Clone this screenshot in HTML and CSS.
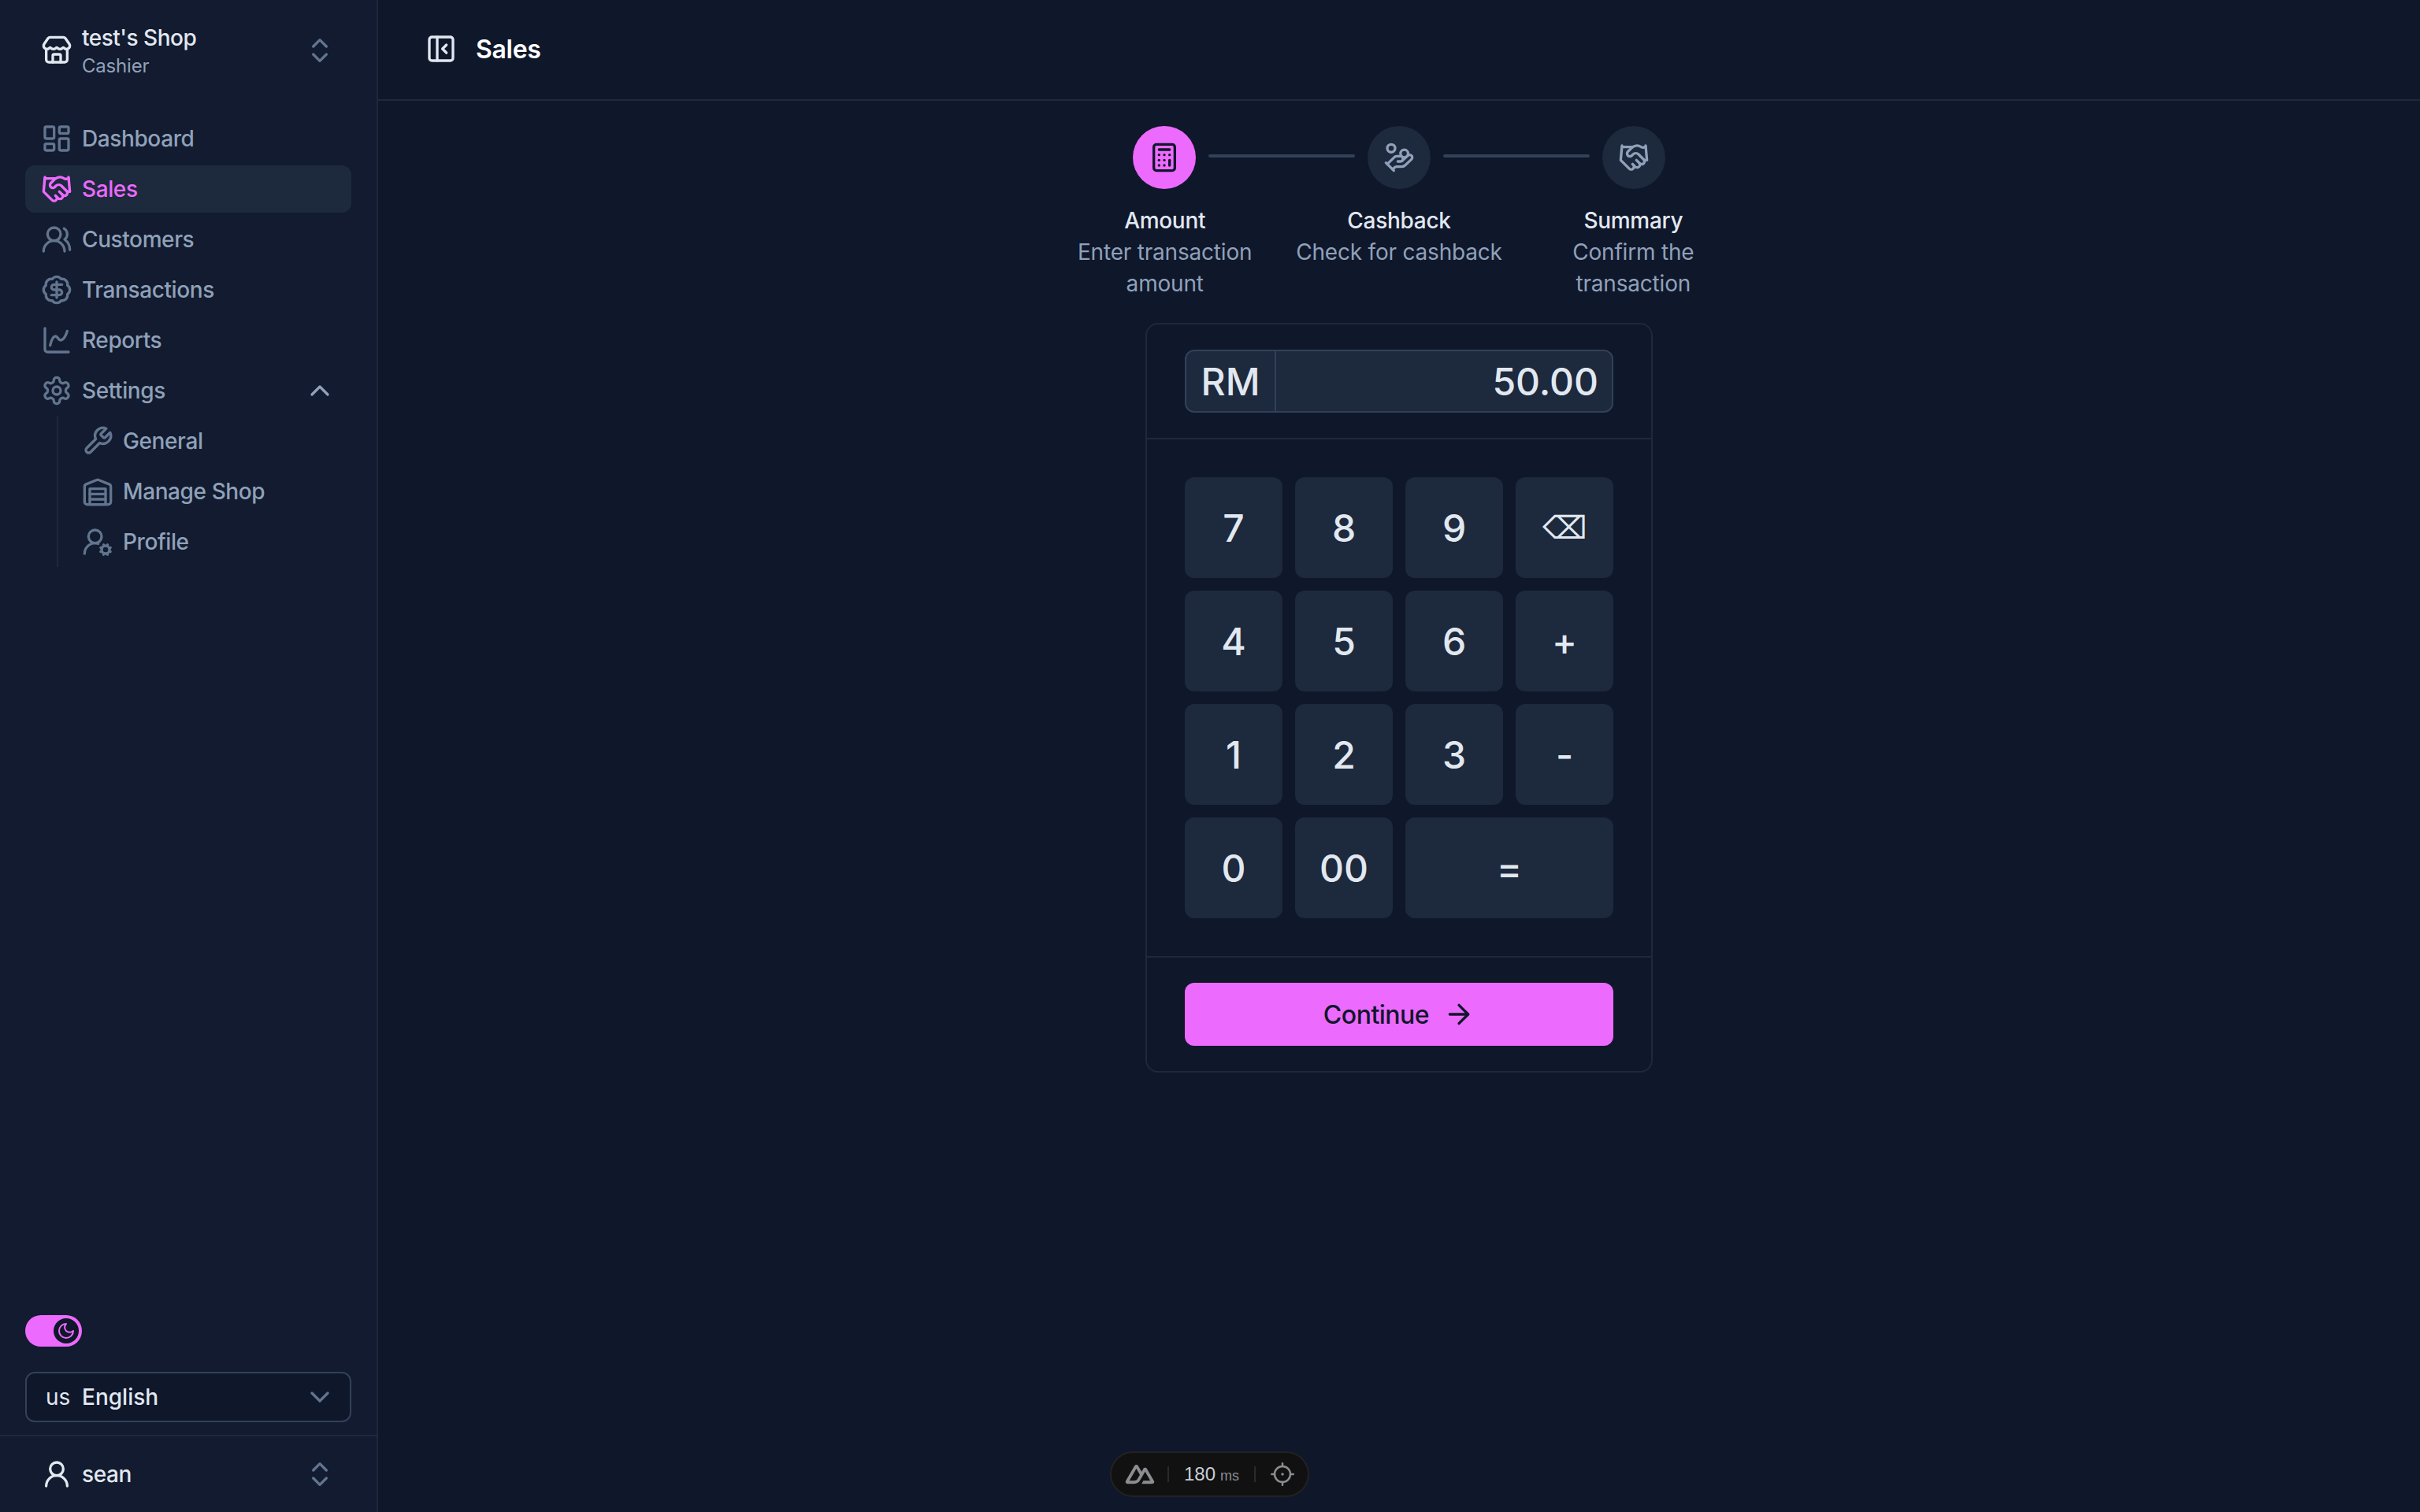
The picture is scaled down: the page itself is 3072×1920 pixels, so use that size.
FILE: index.html
```html
<!DOCTYPE html>
<html lang="en">
<head>
<meta charset="utf-8">
<title>Sales</title>
<link rel="stylesheet" href="styles.css">
</head>
<body>
<svg class="defs" aria-hidden="true">
  <symbol id="updown" viewBox="0 0 24 24"><path d="m7 15 5 5 5-5"/><path d="m7 9 5-5 5 5"/></symbol>
  <symbol id="handshake" viewBox="0 0 24 24"><path d="m11 17 2 2a1 1 0 1 0 3-3"/><path d="m14 14 2.5 2.5a1 1 0 1 0 3-3l-3.88-3.88a3 3 0 0 0-4.24 0l-.88.88a1 1 0 1 1-3-3l2.81-2.81a5.79 5.79 0 0 1 7.06-.87l.47.28a2 2 0 0 0 1.42.25L21 4"/><path d="m21 3 1 11h-2"/><path d="M3 3 2 14l6.5 6.5a1 1 0 1 0 3-3"/><path d="M3 4h8"/></symbol>
</svg>
<div class="app">
  <aside class="sidebar">
    <div class="shop">
      <svg class="ic ic-light" viewBox="0 0 24 24"><path d="M15 21v-5a1 1 0 0 0-1-1h-4a1 1 0 0 0-1 1v5"/><path d="M17.774 10.31a1.12 1.12 0 0 0-1.549 0 2.5 2.5 0 0 1-3.451 0 1.12 1.12 0 0 0-1.548 0 2.5 2.5 0 0 1-3.452 0 1.12 1.12 0 0 0-1.549 0 2.5 2.5 0 0 1-3.77-3.248l2.889-4.184A2 2 0 0 1 7 2h10a2 2 0 0 1 1.653.873l2.895 4.192a2.5 2.5 0 0 1-3.774 3.244"/><path d="M4 10.95V19a2 2 0 0 0 2 2h12a2 2 0 0 0 2-2v-8.05"/></svg>
      <div class="shop-text">
        <div class="shop-name">test's Shop</div>
        <div class="shop-role">Cashier</div>
      </div>
      <svg class="ic ic-dim end"><use href="#updown"/></svg>
    </div>

    <nav class="nav">
      <a class="item"><svg class="ic ic-dim" viewBox="0 0 24 24"><rect x="3" y="3" width="7" height="9" rx="1"/><rect x="14" y="3" width="7" height="5" rx="1"/><rect x="14" y="12" width="7" height="9" rx="1"/><rect x="3" y="16" width="7" height="5" rx="1"/></svg>Dashboard</a>
      <a class="item active"><svg class="ic"><use href="#handshake"/></svg>Sales</a>
      <a class="item"><svg class="ic ic-dim" viewBox="0 0 24 24"><path d="M18 21a8 8 0 0 0-16 0"/><circle cx="10" cy="8" r="5"/><path d="M22 20c0-3.37-2-6.5-4-8a5 5 0 0 0-.45-8.3"/></svg>Customers</a>
      <a class="item"><svg class="ic ic-dim" viewBox="0 0 24 24"><path d="M3.85 8.62a4 4 0 0 1 4.78-4.77 4 4 0 0 1 6.74 0 4 4 0 0 1 4.78 4.78 4 4 0 0 1 0 6.74 4 4 0 0 1-4.77 4.78 4 4 0 0 1-6.75 0 4 4 0 0 1-4.78-4.77 4 4 0 0 1 0-6.76Z"/><path d="M16 8h-6a2 2 0 1 0 0 4h4a2 2 0 1 1 0 4H8"/><path d="M12 18V6"/></svg>Transactions</a>
      <a class="item"><svg class="ic ic-dim" viewBox="0 0 24 24"><path d="M3 3v16a2 2 0 0 0 2 2h16"/><path d="M7 16c.5-2 1.5-7 4-7 2 0 2 3 4 3 2.5 0 4.5-5 5-7"/></svg>Reports</a>
      <a class="item"><svg class="ic ic-dim" viewBox="0 0 24 24"><path d="M12.22 2h-.44a2 2 0 0 0-2 2v.18a2 2 0 0 1-1 1.73l-.43.25a2 2 0 0 1-2 0l-.15-.08a2 2 0 0 0-2.73.73l-.22.38a2 2 0 0 0 .73 2.73l.15.1a2 2 0 0 1 1 1.72v.51a2 2 0 0 1-1 1.74l-.15.09a2 2 0 0 0-.73 2.73l.22.38a2 2 0 0 0 2.73.73l.15-.08a2 2 0 0 1 2 0l.43.25a2 2 0 0 1 1 1.73V20a2 2 0 0 0 2 2h.44a2 2 0 0 0 2-2v-.18a2 2 0 0 1 1-1.73l.43-.25a2 2 0 0 1 2 0l.15.08a2 2 0 0 0 2.73-.73l.22-.39a2 2 0 0 0-.73-2.73l-.15-.08a2 2 0 0 1-1-1.74v-.5a2 2 0 0 1 1-1.74l.15-.09a2 2 0 0 0 .73-2.73l-.22-.38a2 2 0 0 0-2.73-.73l-.15.08a2 2 0 0 1-2 0l-.43-.25a2 2 0 0 1-1-1.73V4a2 2 0 0 0-2-2z"/><circle cx="12" cy="12" r="3"/></svg>Settings<svg class="ic ic-muted end" viewBox="0 0 24 24"><path d="m18 15-6-6-6 6"/></svg></a>
      <div class="sub">
        <a class="item"><svg class="ic ic-dim" viewBox="0 0 24 24"><path d="M14.7 6.3a1 1 0 0 0 0 1.4l1.6 1.6a1 1 0 0 0 1.4 0l3.77-3.77a6 6 0 0 1-7.94 7.94l-6.91 6.91a2.12 2.12 0 0 1-3-3l6.91-6.91a6 6 0 0 1 7.94-7.94l-3.76 3.76z"/></svg>General</a>
        <a class="item"><svg class="ic ic-dim" viewBox="0 0 24 24"><path d="M22 8.35V20a2 2 0 0 1-2 2H4a2 2 0 0 1-2-2V8.35A2 2 0 0 1 3.26 6.5l8-3.2a2 2 0 0 1 1.48 0l8 3.2A2 2 0 0 1 22 8.35Z"/><path d="M6 18h12"/><path d="M6 14h12"/><rect x="6" y="10" width="12" height="12"/></svg>Manage Shop</a>
        <a class="item"><svg class="ic ic-dim" viewBox="0 0 24 24"><path d="M2 21a8 8 0 0 1 10.434-7.62"/><circle cx="10" cy="8" r="5"/><circle cx="18" cy="18" r="3"/><path d="m19.5 14.3-.4.9"/><path d="m16.9 20.8-.4.9"/><path d="m21.7 19.5-.9-.4"/><path d="m15.2 16.9-.9-.4"/><path d="m21.7 16.5-.9.4"/><path d="m15.2 19.1-.9.4"/><path d="m19.5 21.7-.4-.9"/><path d="m16.9 15.2-.4-.9"/></svg>Profile</a>
      </div>
    </nav>

    <div class="side-bottom">
      <div class="toggle">
        <span class="knob"><svg class="moon" viewBox="0 0 24 24"><path d="M12 3a6 6 0 0 0 9 9 9 9 0 1 1-9-9Z"/></svg></span>
      </div>
      <div class="lang">
        <span class="flag">us</span>
        <span class="lang-name">English</span>
        <svg class="ic ic-dim end" viewBox="0 0 24 24"><path d="m6 9 6 6 6-6"/></svg>
      </div>
    </div>

    <div class="user">
      <svg class="ic ic-light" viewBox="0 0 24 24"><circle cx="12" cy="8" r="5"/><path d="M20 21a8 8 0 0 0-16 0"/></svg>
      <span class="user-name">sean</span>
      <svg class="ic ic-dim end"><use href="#updown"/></svg>
    </div>
  </aside>

  <main class="main">
    <header class="topbar">
      <svg class="ic ic-light" viewBox="0 0 24 24"><rect x="3" y="3" width="18" height="18" rx="2"/><path d="M9 3v18"/><path d="m16 15-3-3 3-3"/></svg>
      <h1 class="title">Sales</h1>
    </header>

    <section class="content">
      <div class="step-head">
        <span class="circle circle-on"><svg class="ic ic-ink" viewBox="0 0 24 24"><rect x="4" y="2" width="16" height="20" rx="2"/><line x1="8" x2="16" y1="6" y2="6"/><line x1="16" x2="16" y1="14" y2="18"/><path d="M16 10h.01"/><path d="M12 10h.01"/><path d="M8 10h.01"/><path d="M12 14h.01"/><path d="M8 14h.01"/><path d="M12 18h.01"/><path d="M8 18h.01"/></svg></span>
        <span class="bar"></span>
        <span class="circle"><svg class="ic ic-muted" viewBox="0 0 24 24"><path d="M11 15h2a2 2 0 1 0 0-4h-3c-.6 0-1.1.2-1.4.6L3 17"/><path d="m7 21 1.6-1.4c.3-.4.8-.6 1.4-.6h4c1.1 0 2.1-.4 2.8-1.2l4.6-4.4a2 2 0 0 0-2.75-2.91l-4.2 3.9"/><path d="m2 16 6 6"/><circle cx="16" cy="9" r="2.9"/><circle cx="6" cy="5" r="3"/></svg></span>
        <span class="bar"></span>
        <span class="circle"><svg class="ic ic-muted"><use href="#handshake"/></svg></span>
      </div>
      <div class="step-labels">
        <div class="step"><div class="step-title">Amount</div><div class="step-desc">Enter transaction amount</div></div>
        <div class="step"><div class="step-title">Cashback</div><div class="step-desc">Check for cashback</div></div>
        <div class="step"><div class="step-title">Summary</div><div class="step-desc">Confirm the transaction</div></div>
      </div>

      <div class="card">
        <div class="card-head">
          <div class="amount">
            <span class="currency">RM</span>
            <span class="value">50.00</span>
          </div>
        </div>
        <div class="keypad">
          <button class="key">7</button>
          <button class="key">8</button>
          <button class="key">9</button>
          <button class="key key-back">⌫</button>
          <button class="key">4</button>
          <button class="key">5</button>
          <button class="key">6</button>
          <button class="key key-op">+</button>
          <button class="key">1</button>
          <button class="key">2</button>
          <button class="key">3</button>
          <button class="key key-op">-</button>
          <button class="key">0</button>
          <button class="key">00</button>
          <button class="key key-op key-wide">=</button>
        </div>
        <div class="card-foot">
          <button class="continue">Continue<svg class="ic ic-ink" viewBox="0 0 24 24"><path d="M5 12h14"/><path d="m12 5 7 7-7 7"/></svg></button>
        </div>
      </div>
    </section>
  </main>
</div>

<div class="devtools">
  <svg class="nuxt" viewBox="0 0 512 512"><path d="M281.44 397.667H438.32C443.326 397.667 448.118 395.908 452.453 393.427C456.789 390.946 461.258 387.831 463.76 383.533C466.262 379.236 468.002 374.36 468 369.399C467.998 364.437 466.266 359.563 463.76 355.268L357.76 172.947C355.258 168.65 352.201 165.534 347.867 163.053C343.532 160.573 337.325 158.813 332.32 158.813C327.315 158.813 322.521 160.573 318.187 163.053C313.852 165.534 310.795 168.65 308.293 172.947L281.44 219.587L227.733 129.13C225.229 124.834 222.176 120.307 217.84 117.827C213.504 115.346 208.713 115 203.707 115C198.701 115 193.909 115.346 189.573 117.827C185.238 120.307 180.771 124.834 178.267 129.13L46.8267 355.268C44.3208 359.563 44.0022 364.437 44 369.399C43.9978 374.36 44.3246 379.235 46.8267 383.533C49.3288 387.83 53.7979 390.946 58.1333 393.427C62.4688 395.908 67.2603 397.667 72.2667 397.667H171.2C210.401 397.667 238.934 380.082 258.827 346.787L306.88 263.4L332.32 219.587L410.053 352.44H306.88L281.44 397.667ZM169.787 352.44H100.533L203.707 174.36L256 263.4L221.361 323.784C208.151 345.387 193.089 352.44 169.787 352.44Z"/></svg>
  <span class="dv-sep"></span>
  <span class="dv-time">180<span class="dv-unit">ms</span></span>
  <span class="dv-sep"></span>
  <svg class="target" viewBox="0 0 24 24"><circle cx="12" cy="12" r="8"/><circle class="dot" cx="12" cy="12" r="1.4"/><path d="M12 1v3M12 20v3M1 12h3M20 12h3"/></svg>
</div>
</body>
</html>
```

FILE: styles.css
```css
* { box-sizing: border-box; }
html, body { margin: 0; height: 100%; }
body {
  background: #0f172b;
  color: #e2e8f0;
  font-family: "Inter", "Noto Sans", sans-serif;
  font-size: 28px;
  overflow: hidden;
}
.defs { display: none; }

.ic {
  width: 40px;
  height: 40px;
  flex: none;
  fill: none;
  stroke: currentColor;
  stroke-width: 2;
  stroke-linecap: round;
  stroke-linejoin: round;
}
.ic-light { color: #e2e8f0; }
.ic-dim { color: #62748e; }
.ic-muted { color: #90a1b9; }
.ic-ink { color: #0f172b; }
.end { margin-left: auto; }

.app { display: flex; height: 1920px; }

/* Sidebar */
.sidebar {
  width: 480px;
  flex: none;
  display: flex;
  flex-direction: column;
  background: #121b2f;
  border-right: 2px solid #1d293d;
}
.shop {
  height: 128px;
  flex: none;
  display: flex;
  align-items: center;
  gap: 12px;
  padding: 0 52px;
}
.shop-text { display: flex; flex-direction: column; }
.shop-name { font-size: 28px; line-height: 40px; font-weight: 500; color: #e2e8f0; letter-spacing: -0.5px; }
.shop-role { font-size: 24px; line-height: 32px; color: #90a1b9; letter-spacing: -0.2px; }

.nav {
  display: flex;
  flex-direction: column;
  gap: 4px;
  padding: 18px 32px 0;
}
.item {
  height: 60px;
  display: flex;
  align-items: center;
  gap: 12px;
  padding: 0 20px;
  border-radius: 12px;
  color: #90a1b9;
  font-weight: 500;
  letter-spacing: -0.4px;
  white-space: nowrap;
}
.item.active { background: #1d293d; color: #ed6aff; }
.sub {
  display: flex;
  flex-direction: column;
  gap: 4px;
  margin: -2px 0 0 40px;
  padding: 2px 0 2px 10px;
  border-left: 2px solid #1d293d;
}
.sub .item { padding-left: 20px; }

.side-bottom {
  margin-top: auto;
  display: flex;
  flex-direction: column;
  align-items: flex-start;
  gap: 32px;
  padding: 0 32px 16px;
}
.toggle {
  width: 72px;
  height: 40px;
  padding: 4px;
  display: flex;
  justify-content: flex-end;
  background: #ed6aff;
  border-radius: 20px;
}
.knob {
  width: 32px;
  height: 32px;
  display: flex;
  align-items: center;
  justify-content: center;
  background: #0f172b;
  border-radius: 50%;
}
.moon { width: 24px; height: 24px; fill: none; stroke: #ed6aff; stroke-width: 2; stroke-linecap: round; stroke-linejoin: round; }
.lang {
  width: 100%;
  height: 64px;
  display: flex;
  align-items: center;
  padding: 0 18px 0 24px;
  background: #0f172b;
  border: 2px solid #314158;
  border-radius: 12px;
  color: #e2e8f0;
}
.flag { width: 46px; font-size: 28px; }
.lang-name { font-weight: 500; }

.user {
  height: 98px;
  flex: none;
  display: flex;
  align-items: center;
  gap: 12px;
  padding: 0 52px;
  border-top: 2px solid #1d293d;
}
.user-name { font-weight: 500; color: #e2e8f0; letter-spacing: -0.4px; }

/* Main */
.main { flex: 1; min-width: 0; display: flex; flex-direction: column; }
.topbar {
  height: 128px;
  flex: none;
  display: flex;
  align-items: center;
  gap: 24px;
  padding: 0 40px 2px 60px;
  border-bottom: 2px solid #1d293d;
}
.title { margin: 0; font-size: 32px; font-weight: 600; color: #fff; letter-spacing: -0.3px; }

.content { display: flex; flex-direction: column; align-items: center; padding-top: 32px; }
.step-head { display: flex; align-items: center; gap: 16px; }
.circle {
  width: 80px;
  height: 80px;
  display: flex;
  align-items: center;
  justify-content: center;
  background: #1d293d;
  border-radius: 50%;
}
.circle-on { background: #ed6aff; }
.bar { width: 186px; height: 4px; margin-top: -4px; border-radius: 2px; background: #314158; }
.step-labels {
  width: 892px;
  display: grid;
  grid-template-columns: repeat(3, 1fr);
  margin-top: 20px;
  text-align: center;
}
.step { padding: 0 16px; }
.step-title { font-size: 28px; line-height: 40px; font-weight: 500; color: #e2e8f0; letter-spacing: -0.3px; }
.step-desc { font-size: 28px; line-height: 40px; color: #90a1b9; letter-spacing: -0.2px; }

.card {
  width: 644px;
  margin-top: 30px;
  border: 2px solid #1d293d;
  border-radius: 16px;
}
.card-head { padding: 32px 48px; border-bottom: 2px solid #1d293d; }
.amount {
  height: 80px;
  display: flex;
  align-items: stretch;
  background: #1d293d;
  border: 2px solid #314158;
  border-radius: 12px;
  font-size: 48px;
  font-weight: 500;
  color: #e2e8f0;
}
.currency {
  width: 114px;
  flex: none;
  display: flex;
  align-items: center;
  justify-content: center;
  border-right: 2px solid #314158;
}
.value { flex: 1; display: flex; align-items: center; justify-content: flex-end; padding-right: 17px; }

.keypad {
  display: grid;
  grid-template-columns: repeat(4, 124px);
  grid-auto-rows: 128px;
  gap: 16px;
  padding: 48px;
  border-bottom: 2px solid #1d293d;
}
.key {
  display: flex;
  align-items: center;
  justify-content: center;
  padding: 0;
  border: 0;
  border-radius: 12px;
  background: #1d293d;
  color: #e2e8f0;
  font-family: inherit;
  font-size: 48px;
  font-weight: 500;
}
.key-back { font-family: "DejaVu Sans", sans-serif; font-size: 40px; font-weight: 400; }
.key-wide { grid-column: span 2; }

.card-foot { padding: 32px 48px; }
.continue {
  width: 100%;
  height: 80px;
  display: flex;
  align-items: center;
  justify-content: center;
  gap: 18px;
  padding: 0;
  border: 0;
  border-radius: 12px;
  background: #ed6aff;
  color: #0f172b;
  font-family: inherit;
  font-size: 32px;
  font-weight: 500;
  letter-spacing: -0.5px;
}

/* Overlay */
.devtools {
  position: fixed;
  left: 1409px;
  top: 1843px;
  width: 253px;
  height: 58px;
  display: flex;
  align-items: center;
  padding: 0 0 0 14px;
  background: #111;
  border: 2px solid #222;
  border-radius: 29px;
  font-family: "Liberation Sans", sans-serif;
}
.nuxt { width: 44px; height: 44px; flex: none; fill: #8b8d91; margin-right: -6px; }
.dv-sep { width: 2px; height: 20px; flex: none; background: #2a2a2a; margin: 0 19px; }
.dv-time { display: flex; align-items: baseline; gap: 6px; font-size: 24px; color: #c9ced6; }
.dv-unit { font-size: 18px; color: #8b8d91; }
.target { width: 30px; height: 30px; flex: none; fill: none; stroke: #8b8d91; stroke-width: 2; stroke-linecap: round; }
.target .dot { fill: #8b8d91; stroke: none; }
```
